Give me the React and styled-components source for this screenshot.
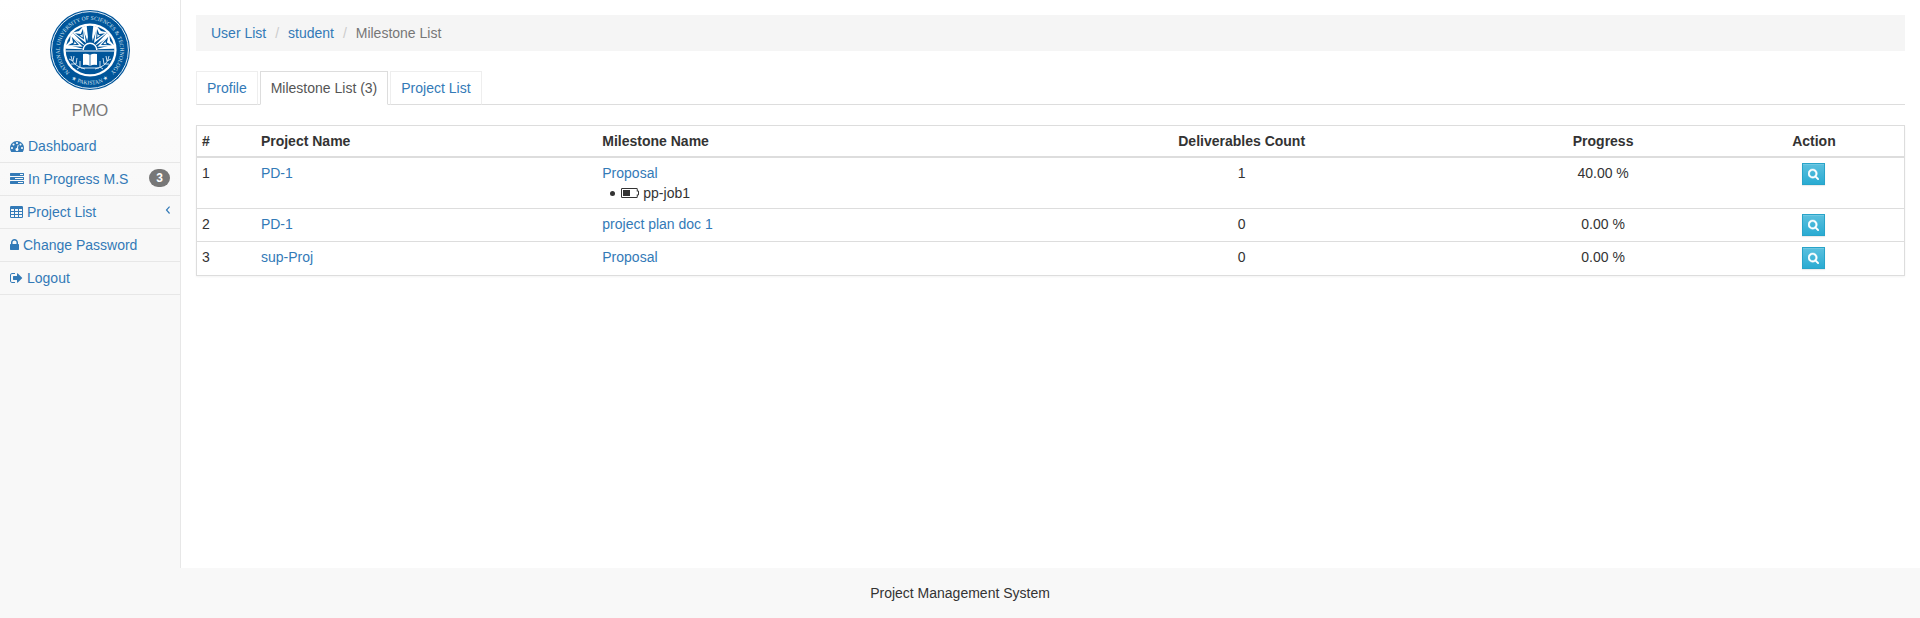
import React from "react";
import styled, { createGlobalStyle, css } from "styled-components";

const GlobalStyle = createGlobalStyle`
  *, *::before, *::after { box-sizing: border-box; }
  body {
    margin: 0;
    background: #f8f8f8;
    color: #333;
    font: 14px/20px "Liberation Sans", Arial, sans-serif;
  }
  a { color: #337ab7; text-decoration: none; }
  a:hover { text-decoration: underline; }
`;

const Page = styled.div`
  display: flex;
  flex-direction: column;
  min-height: 100vh;
`;

const Body = styled.div`
  display: flex;
  flex: 1;
`;

const Sidebar = styled.aside`
  flex: 0 0 181px;
  border-right: 1px solid #e7e7e7;
  background: linear-gradient(#fff 0, #f8f8f8 200px);
`;

const Brand = styled.div`
  display: flex;
  flex-direction: column;
  align-items: center;
  gap: 11px;
  padding: 10px 0 9px;
  color: #777;
  font-size: 16px;
`;

const NavList = styled.ul`
  margin: 0;
  padding: 0;
  list-style: none;
`;

const NavItem = styled.li`
  border-bottom: 1px solid #e7e7e7;
`;

const NavLink = styled.a`
  display: flex;
  gap: 4px;
  padding: 6px 10px;
`;

const NavEnd = styled.span`
  margin-left: auto;
`;

const Badge = styled.span`
  display: block;
  margin-left: auto;
  padding: 3px 7px;
  border-radius: 10px;
  background: #777;
  color: #fff;
  font-size: 12px;
  font-weight: bold;
  line-height: 12px;
  align-self: flex-start;
`;

const Glyph = styled.svg`
  display: block;
  flex: none;
  height: ${(p) => p.$size || 14}px;
  margin-top: ${(p) => p.$top ?? 3}px;
  fill: currentColor;
`;

const Main = styled.main`
  flex: 1;
  min-width: 0;
  padding: 15px;
  background: #fff;
`;

const Crumbs = styled.ol`
  display: flex;
  gap: 4px;
  margin: 0 0 20px;
  padding: 8px 15px;
  list-style: none;
  background: #f5f5f5;
`;

const Crumb = styled.li`
  color: #777;
  & + &::before {
    content: "/\\00a0";
    padding: 0 5px;
    color: #ccc;
  }
`;

const Tabs = styled.nav`
  display: flex;
  gap: 2px;
  margin-bottom: 20px;
  border-bottom: 1px solid #ddd;
`;

const Tab = styled.a`
  margin-bottom: -1px;
  padding: 6px 10px;
  border: 1px solid #eee;
  border-bottom-color: #ddd;
  ${(p) =>
    p.$active &&
    css`
      color: #555;
      background: #fff;
      border-color: #ddd #ddd #fff;
    `}
`;

const Table = styled.table`
  width: 100%;
  table-layout: fixed;
  border: 1px solid #ddd;
  border-spacing: 0;
  box-shadow: 0 1px 2px rgba(0, 0, 0, 0.05);
`;

const Col = styled.col`
  width: ${(p) => p.$width};
`;

const Head = styled.th`
  padding: 5px;
  border-bottom: 2px solid #ddd;
  text-align: ${(p) => (p.$center ? "center" : "left")};
`;

const Cell = styled.td`
  padding: 5px;
  vertical-align: top;
  text-align: ${(p) => (p.$center ? "center" : "left")};
  tr + tr > & { border-top: 1px solid #ddd; }
  tr:last-child > & { padding-bottom: 6px; }
`;

const JobList = styled.ul`
  margin: 0;
  padding: 0 0 0 8px;
  list-style: none;
`;

const Job = styled.li`
  display: flex;
  gap: 4px;
  &::before {
    content: "";
    width: 5px;
    height: 5px;
    margin: 8px 2px 0 0;
    border-radius: 50%;
    background: currentColor;
  }
`;

const ViewButton = styled.button`
  display: inline-flex;
  align-items: center;
  justify-content: center;
  width: 23px;
  height: 22px;
  padding: 0;
  border: 1px solid #28a4c9;
  background: linear-gradient(#5bc0de, #2aabd2);
  box-shadow: inset 0 1px 0 rgba(255, 255, 255, 0.15), 0 1px 1px rgba(0, 0, 0, 0.08);
  color: #fff;
  vertical-align: top;
  cursor: pointer;

  path {
    stroke: currentColor;
    stroke-width: 60px;
  }
`;

const Footer = styled.footer`
  padding: 15px;
  text-align: center;
`;

const LogoSvg = styled.svg`
  display: block;
  width: 80px;
  height: 80px;
`;

const cells = [128, 640, 1152]
  .flatMap((x) => [512, 896, 1280].map((y) => `M${x} ${y}v256h384v-256z`))
  .join("");

const icons = {
  dashboard: {
    w: 1792,
    d: "M384 1152q0-53-37.5-90.5T256 1024t-90.5 37.5T128 1152t37.5 90.5T256 1280t90.5-37.5T384 1152zm192-448q0-53-37.5-90.5T448 576t-90.5 37.5T320 704t37.5 90.5T448 832t90.5-37.5T576 704zm428 481l101-382q6-26-7.5-48.5T1059 725t-48 6.5-30 39.5L880 1154q-60 5-107 43.5T710 1296q-20 77 20 146t117 89 146-20 89-117q16-60-6-117t-72-91zm660-33q0-53-37.5-90.5T1536 1024t-90.5 37.5-37.5 90.5 37.5 90.5 90.5 37.5 90.5-37.5 37.5-90.5zM1024 512q0-53-37.5-90.5T896 384t-90.5 37.5T768 512t37.5 90.5T896 640t90.5-37.5T1024 512zm448 192q0-53-37.5-90.5T1344 576t-90.5 37.5T1216 704t37.5 90.5T1344 832t90.5-37.5T1472 704zm320 448q0 261-141 483-19 29-54 29H195q-35 0-54-29Q0 1414 0 1152q0-182 71-348t191-286 286-191 348-71 348 71 286 191 191 286 71 348z",
  },
  tasks: {
    w: 1792,
    d: "M1024 1408h640v-128h-640v128zm-384-512h1024V768H640v128zm640-512h384V256h-384v128zm512 832v256q0 26-19 45t-45 19H64q-26 0-45-19t-19-45v-256q0-26 19-45t45-19h1664q26 0 45 19t19 45zm0-512v256q0 26-19 45t-45 19H64q-26 0-45-19T0 960V704q0-26 19-45t45-19h1664q26 0 45 19t19 45zm0-512v256q0 26-19 45t-45 19H64q-26 0-45-19T0 448V192q0-26 19-45t45-19h1664q26 0 45 19t19 45z",
  },
  table: {
    w: 1664,
    d: `M160 128h1344q160 0 160 160v1216q0 160-160 160H160q-160 0-160-160V288q0-160 160-160z${cells}`,
  },
  lock: {
    w: 1152,
    d: "M320 768h512V576q0-106-75-181t-181-75-181 75-75 181v192zm832 96v576q0 40-28 68t-68 28H96q-40 0-68-28t-28-68V864q0-40 28-68t68-28h32V576q0-184 132-316T576 128t316 132 132 316v192h32q40 0 68 28t28 68z",
  },
  logout: {
    w: 1664,
    d: "M640 1440q0 4 1 20t.5 26.5-3 23.5-10 19.5-20.5 6.5H288q-119 0-203.5-84.5T0 1248V544q0-119 84.5-203.5T288 256h320q13 0 22.5 9.5T640 288q0 4 1 20t.5 26.5-3 23.5-10 19.5T608 384H288q-66 0-113 47t-47 113v704q0 66 47 113t113 47h312l11.5 1 11.5 3 8 5.5 7 9 2 13.5zm928-544q0 26-19 45l-544 544q-19 19-45 19t-45-19-19-45v-288H448q-26 0-45-19t-19-45V704q0-26 19-45t45-19h448V352q0-26 19-45t45-19 45 19l544 544q19 19 19 45z",
  },
  angle: {
    w: 640,
    d: "M530 400l110 100-340 396 340 396-110 100L90 896z",
  },
  search: {
    w: 1664,
    d: "M1152 832q0-185-131.5-316.5T704 384 387.5 515.5 256 832t131.5 316.5T704 1280t316.5-131.5T1152 832zm512 832q0 52-38 90t-90 38q-54 0-90-38l-343-342q-179 124-399 124-143 0-273.5-55.5t-225-150-150-225T0 832t55.5-273.5 150-225 225-150T704 128t273.5 55.5 225 150 150 225T1408 832q0 220-124 399l343 343q37 37 37 90z",
  },
  battery: {
    w: 2304,
    d: "M160 256h1824q160 0 160 160v160q160 0 160 128v384q0 128-160 128v160q0 160-160 160H160q-160 0-160-160V416q0-160 160-160zM128 384v1024h1888v-320h160V704h-160V384zM256 512h896v768H256z",
  },
};

function Icon({ name, size = 14, top }) {
  const { w, d } = icons[name];
  return (
    <Glyph
      viewBox={`0 0 ${w} 1792`}
      width={Math.round((w / 1792) * size)}
      $size={size}
      $top={top}
      aria-hidden="true"
    >
      <path fillRule={name === "battery" || name === "table" ? "evenodd" : "nonzero"} d={d} />
    </Glyph>
  );
}

function Logo() {
  return (
    <LogoSvg viewBox="-40 -40 80 80" role="img" aria-label="University seal">
      <defs>
        <path id="ringTop" d="M-18 24.3A30.2 30.2 0 1 1 18 24.3" />
        <path id="ringBottom" d="M-27 21.5A34.5 34.5 0 0 0 27 21.5" />
      </defs>
      <circle r="40" fill="#00559a" />
      <circle r="38.4" fill="none" stroke="#fff" strokeWidth="0.9" />
      <circle r="26.6" fill="#fff" />
      <circle r="24.3" fill="#00559a" />
      <g fill="#dbe8f3" fontFamily="Liberation Serif, serif" fontSize="6" textAnchor="middle">
        <text fontSize="5.6">
          <textPath href="#ringTop" startOffset="50%">
            NATIONAL UNIVERSITY OF SCIENCES &amp; TECHNOLOGY
          </textPath>
        </text>
        <text fontSize="5.6">
          <textPath href="#ringBottom" startOffset="50%">
            ★ PAKISTAN ★
          </textPath>
        </text>
      </g>
      <g fill="#fff">
        {[-82, -50, -13, 13, 50, 82].map((a) => (
          <path key={a} transform={`rotate(${a})`} d="M0 -5L-2.2 -24.3H2.2Z" />
        ))}
        {[-66, -30, 30, 66].map((a) => (
          <path key={a} transform={`rotate(${a})`} d="M0 -8L-6.4 -24L0 -22L6.4 -24Z" />
        ))}
      </g>
      <g fill="#00559a">
        {[-66, -30, 30, 66].map((a) => (
          <path key={a} transform={`rotate(${a})`} d="M0 -12L-4.6 -22L0 -18.5L4.6 -22Z" />
        ))}
        {[-66, -30, 30, 66].map((a) => (
          <path key={a} transform={`rotate(${a})`} fill="#fff" d="M0 -14.5L-1.6 -18L0 -17L1.6 -18Z" />
        ))}
        <path d="M-3.4 -6L0 -24L3.4 -6Z" />
      </g>
      <path d="M-6.8 0A6.8 6.8 0 0 1 6.8 0" fill="#00559a" stroke="#fff" strokeWidth="1.4" />
      <path d="M-24.3 1H24.3" stroke="#fff" strokeWidth="1.2" />
      <path d="M-7 4Q-3 3 0 5Q3 3 7 4V15Q3 14 0 16Q-3 14 -7 15Z" fill="#fff" />
      <path d="M0 5V16" stroke="#00559a" strokeWidth="0.8" />
      <g fill="none" stroke="#e6eff7" strokeWidth="0.9">
        <path d="M-19 6Q-18 16 -5 19M19 6Q18 16 5 19M-9 18H9" />
        <path d="M-21 9L-17 11L-16 6M-19 14L-14 14L-13 8M-13 19L-10 17L-10 11M21 9L17 11L16 6M19 14L14 14L13 8M13 19L10 17L10 11" />
      </g>
    </LogoSvg>
  );
}

const nav = [
  { icon: "dashboard", label: "Dashboard" },
  { icon: "tasks", label: "In Progress M.S", badge: 3 },
  { icon: "table", label: "Project List", expandable: true },
  { icon: "lock", label: "Change Password" },
  { icon: "logout", label: "Logout" },
];

const rows = [
  { project: "PD-1", milestone: "Proposal", jobs: ["pp-job1"], count: 1, progress: "40.00 %" },
  { project: "PD-1", milestone: "project plan doc 1", jobs: [], count: 0, progress: "0.00 %" },
  { project: "sup-Proj", milestone: "Proposal", jobs: [], count: 0, progress: "0.00 %" },
];

const columns = [
  { label: "#", width: "3.45%" },
  { label: "Project Name", width: "20%" },
  { label: "Milestone Name", width: "23.65%" },
  { label: "Deliverables Count", width: "28.2%", center: true },
  { label: "Progress", width: "14.15%", center: true },
  { label: "Action", width: "10.55%", center: true },
];

export default function App() {
  return (
    <Page>
      <GlobalStyle />
      <Body>
        <Sidebar>
          <Brand>
            <Logo />
            <span>PMO</span>
          </Brand>
          <NavList>
            {nav.map((item) => (
              <NavItem key={item.label}>
                <NavLink href="#">
                  <Icon name={item.icon} />
                  <span>{item.label}</span>
                  {item.badge && <Badge>{item.badge}</Badge>}
                  {item.expandable && (
                    <NavEnd>
                      <Icon name="angle" top={1} />
                    </NavEnd>
                  )}
                </NavLink>
              </NavItem>
            ))}
          </NavList>
        </Sidebar>
        <Main>
          <Crumbs>
            <Crumb><a href="#">User List</a></Crumb>
            <Crumb><a href="#">student</a></Crumb>
            <Crumb>Milestone List</Crumb>
          </Crumbs>
          <Tabs>
            <Tab href="#">Profile</Tab>
            <Tab href="#" $active aria-current="page">Milestone List (3)</Tab>
            <Tab href="#">Project List</Tab>
          </Tabs>
          <Table>
            <colgroup>
              {columns.map((c) => <Col key={c.label} $width={c.width} />)}
            </colgroup>
            <thead>
              <tr>
                {columns.map((c) => (
                  <Head key={c.label} scope="col" $center={c.center}>{c.label}</Head>
                ))}
              </tr>
            </thead>
            <tbody>
              {rows.map((row, i) => (
                <tr key={i}>
                  <Cell>{i + 1}</Cell>
                  <Cell><a href="#">{row.project}</a></Cell>
                  <Cell>
                    <a href="#">{row.milestone}</a>
                    {row.jobs.length > 0 && (
                      <JobList>
                        {row.jobs.map((job) => (
                          <Job key={job}><Icon name="battery" />{job}</Job>
                        ))}
                      </JobList>
                    )}
                  </Cell>
                  <Cell $center>{row.count}</Cell>
                  <Cell $center>{row.progress}</Cell>
                  <Cell $center>
                    <ViewButton type="button" aria-label="View milestone">
                      <Icon name="search" size={12} top={0} />
                    </ViewButton>
                  </Cell>
                </tr>
              ))}
            </tbody>
          </Table>
        </Main>
      </Body>
      <Footer>Project Management System</Footer>
    </Page>
  );
}
